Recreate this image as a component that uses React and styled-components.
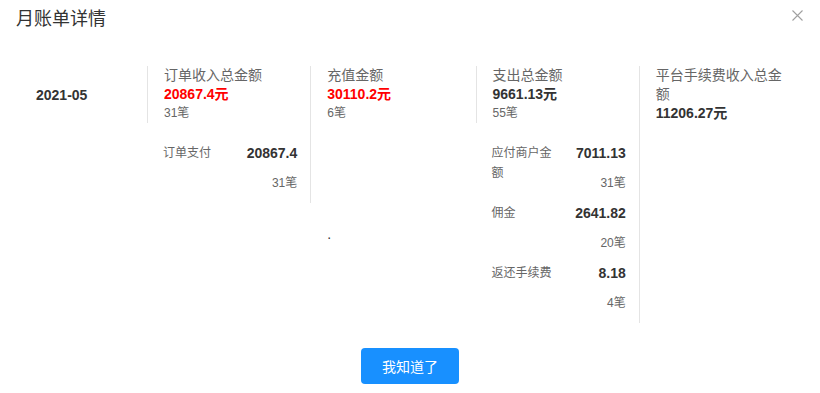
import React from 'react'
import styled, { createGlobalStyle } from 'styled-components'

const GlobalStyle = createGlobalStyle`
  body {
    margin: 0;
    background: #fff;
    font-family: "Liberation Sans", "Noto Sans CJK SC", sans-serif;
    color: #333;
  }
`

const Dialog = styled.div`
  position: relative;
  width: 820px;
  height: 393px;
  background: #fff;
  box-sizing: border-box;
`

const Header = styled.div`
  padding: 9px 16px 0;
  font-size: 18px;
  line-height: 20px;
  color: #333;
`

const Close = styled.button`
  position: absolute;
  top: 9px;
  right: 16px;
  width: 13px;
  height: 13px;
  padding: 0;
  border: none;
  background: none;
  cursor: pointer;
  svg {
    display: block;
  }
`

const Grid = styled.div`
  display: grid;
  grid-template-columns: 147px repeat(4, 1fr);
  align-items: start;
  width: 804px;
  margin-top: 37px;
`

const DateCell = styled.div`
  padding: 20px 0 0 36px;
  font-size: 14px;
  line-height: 19px;
  font-weight: bold;
  color: #333;
`

const Column = styled.div`
  border-right: ${p => (p.divider ? '1px solid #e4e4e4' : 'none')};
  padding-bottom: ${p => (p.divider ? '10px' : '0')};
`

const Summary = styled.div`
  border-left: ${p => (p.bordered ? '1px solid #e4e4e4' : 'none')};
  padding: 0 16px;
  line-height: 19px;
`

const Title = styled.div`
  font-size: 14px;
  color: #666;
`

const Amount = styled.div`
  font-size: 14px;
  font-weight: bold;
  color: ${p => (p.red ? '#ff0000' : '#333')};
`

const Count = styled.div`
  font-size: 12px;
  color: #666;
`

const Details = styled.div`
  display: flex;
  flex-direction: column;
  gap: 10px;
  margin-top: 20px;
  padding: 0 13px 0 16px;
`

const Row = styled.div`
  display: flex;
  align-items: flex-start;
  justify-content: space-between;
`

const Label = styled.div`
  width: 66px;
  font-size: 12px;
  line-height: 20px;
  color: #666;
`

const Figures = styled.div`
  display: flex;
  flex-direction: column;
  align-items: flex-end;
`

const Value = styled.div`
  font-size: 14px;
  line-height: 20px;
  font-weight: bold;
  color: #333;
`

const RowCount = styled.div`
  margin-top: 10px;
  font-size: 12px;
  line-height: 20px;
  color: #666;
`

const Stray = styled.div`
  margin-top: 101px;
  padding-left: 16px;
  font-size: 14px;
  line-height: 20px;
  color: #333;
`

const Footer = styled.div`
  display: flex;
  justify-content: center;
  margin-top: 25px;
`

const OkButton = styled.button`
  width: 98px;
  height: 36px;
  border: none;
  border-radius: 4px;
  background: #1890ff;
  color: #fff;
  font-family: inherit;
  font-size: 14px;
  cursor: pointer;
`

const columns = [
  {
    title: '订单收入总金额',
    amount: '20867.4元',
    red: true,
    count: '31笔',
    bordered: true,
    divider: true,
    rows: [{ label: '订单支付', value: '20867.4', count: '31笔' }],
  },
  {
    title: '充值金额',
    amount: '30110.2元',
    red: true,
    count: '6笔',
    stray: '.',
  },
  {
    title: '支出总金额',
    amount: '9661.13元',
    count: '55笔',
    bordered: true,
    divider: true,
    rows: [
      { label: '应付商户金额', value: '7011.13', count: '31笔' },
      { label: '佣金', value: '2641.82', count: '20笔' },
      { label: '返还手续费', value: '8.18', count: '4笔' },
    ],
  },
  {
    title: '平台手续费收入总金额',
    amount: '11206.27元',
  },
]

const App = () => (
  <Dialog>
    <GlobalStyle />
    <Header>月账单详情</Header>
    <Close aria-label="close">
      <svg width="13" height="13" viewBox="0 0 13 13">
        <path d="M1.5 1.5 L11.5 11.5 M11.5 1.5 L1.5 11.5" stroke="#a0a0a0" strokeWidth="1.1" fill="none" />
      </svg>
    </Close>
    <Grid>
      <DateCell>2021-05</DateCell>
      {columns.map(col => (
        <Column key={col.title} divider={col.divider}>
          <Summary bordered={col.bordered}>
            <Title>{col.title}</Title>
            <Amount red={col.red}>{col.amount}</Amount>
            {col.count && <Count>{col.count}</Count>}
          </Summary>
          {col.rows && (
            <Details>
              {col.rows.map(r => (
                <Row key={r.label}>
                  <Label>{r.label}</Label>
                  <Figures>
                    <Value>{r.value}</Value>
                    <RowCount>{r.count}</RowCount>
                  </Figures>
                </Row>
              ))}
            </Details>
          )}
          {col.stray && <Stray>{col.stray}</Stray>}
        </Column>
      ))}
    </Grid>
    <Footer>
      <OkButton>我知道了</OkButton>
    </Footer>
  </Dialog>
)

export default App
